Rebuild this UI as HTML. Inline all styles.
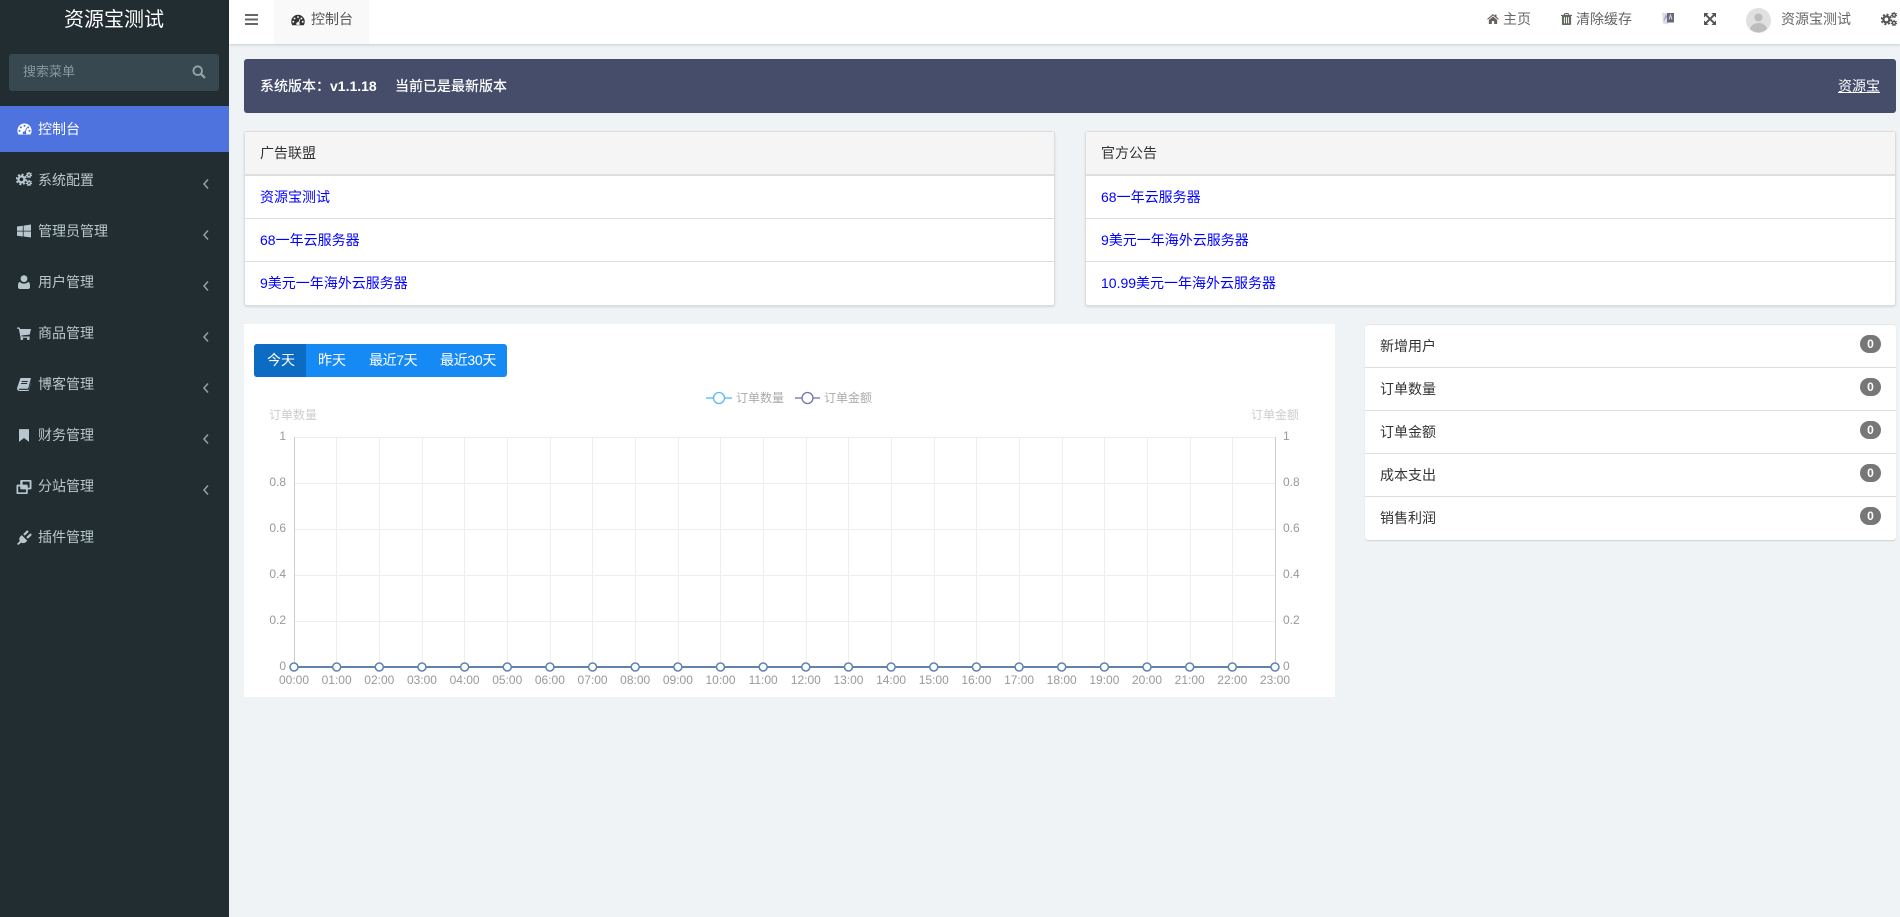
<!DOCTYPE html>
<html lang="zh-CN"><head><meta charset="utf-8"><title>控制台</title>
<style>
*{box-sizing:border-box}
html,body{margin:0;padding:0;width:1900px;height:917px;overflow:hidden;background:#eff3f6;font:14px/20px "Liberation Sans","Noto Sans CJK SC",sans-serif;color:#333}
.a{position:absolute;white-space:nowrap}
.side{position:absolute;left:0;top:0;width:229px;height:917px;background:#222d32}
.m{position:absolute;left:38px;color:#b8c7ce;line-height:20px;white-space:nowrap}
.ic{position:absolute;display:block;fill:currentColor}
.ch{position:absolute;left:202px;width:8px;height:12px;fill:none;stroke:#8fa3ad;stroke-width:1.5}
.top{position:absolute;left:229px;top:0;width:1671px;height:44px;background:#fff;box-shadow:0 1px 3px rgba(0,0,0,.16)}
.panel{position:absolute;top:131px;height:175px;background:#fff;border:1px solid #ddd;border-radius:3px;box-shadow:0 1px 2px rgba(0,0,0,.12)}
.panel .h{height:44px;background:#f5f5f5;padding:11px 15px;color:#333;border-bottom:2px solid #ddd}
.panel .r{height:43px;padding:11px 15px;color:#00f;border-bottom:1px solid #ddd;margin-top:0}
.panel .r:last-child{border-bottom:0}
.lst{position:absolute;left:1365px;top:325px;width:531px;height:215px;background:#fff;border-radius:3px;box-shadow:0 -1px 0 #e4e6e8,0 1px 1px rgba(0,0,0,.14)}
.lst div.r{height:43px;border-bottom:1px solid #ddd;padding:11px 15px;position:relative;color:#333}
.lst div.r:last-child{border-bottom:0}
.b{position:absolute;left:495px;top:10px;width:21px;height:18px;border-radius:9px;background:#777;color:#fff;font:bold 12px/18px "Liberation Sans",sans-serif;text-align:center}
svg text{font-family:"Liberation Sans","Noto Sans CJK SC",sans-serif;font-size:12px}
</style></head><body>
<svg width="0" height="0" style="position:absolute"><defs>
<symbol id="dash" viewBox="0 0 16 13"><path fill-rule="evenodd" d="M8 0.500a7.700 7.700 0 0 0-7.700 7.700c0 1.600.4 3 1.200 4.300h13c.8-1.300 1.200-2.700 1.200-4.300A7.700 7.700 0 0 0 8 .5zM8 2a1.100 1.100 0 1 1 0 2.200A1.100 1.100 0 0 1 8 2zM4 3.600a1.100 1.100 0 1 1 0 2.200 1.100 1.100 0 0 1 0-2.200zM12 3.600a1.100 1.100 0 1 1 0 2.200 1.100 1.100 0 0 1 0-2.200zM2.600 7.400a1.100 1.100 0 1 1 0 2.200 1.100 1.100 0 0 1 0-2.200zM13.400 7.400a1.100 1.100 0 1 1 0 2.200 1.100 1.100 0 0 1 0-2.200zM10 5l.8.3-1.400 4.300c.4.4.6.8.6 1.300 0 .5-.2.9-.4 1.100H6.400c-.2-.2-.4-.6-.4-1.100 0-1.100.9-2 2-2h.4z"/></symbol>
<symbol id="cogs" viewBox="0 0 16 14"><g fill="none" stroke="currentColor"><circle cx="5.400" cy="7.400" r="3" stroke-width="2.300"/><circle cx="5.400" cy="7.400" r="4.900" stroke-width="1.800" stroke-dasharray="2 1.850"/><circle cx="13" cy="3" r="1.600" stroke-width="1.400"/><circle cx="13" cy="3" r="2.600" stroke-width="1.100" stroke-dasharray="1.200 1.100"/><circle cx="13" cy="11" r="1.600" stroke-width="1.400"/><circle cx="13" cy="11" r="2.600" stroke-width="1.100" stroke-dasharray="1.200 1.100"/></g></symbol>
<symbol id="win" viewBox="0 0 14 13"><path d="M0 2l5.800-.8v5H0zM6.600 1.100L14 0v6.200H6.600zM0 7h5.800v5L0 11.200zM6.600 7H14v6l-7.400-1z"/></symbol>
<symbol id="user" viewBox="0 0 12 14"><circle cx="6" cy="3.700" r="3.400"/><path d="M1.500 6.800C.5 7.500 0 9 0 11v1.200C0 13.200.8 14 1.800 14h8.400c1 0 1.800-.8 1.800-1.800V11c0-2-.5-3.500-1.500-4.200C9.500 8 7.900 8.600 6 8.600S2.500 8 1.500 6.800z"/></symbol>
<symbol id="cart" viewBox="0 0 14 13"><path d="M0 .5h2.600l.5 1.500H14l-1.300 5.600-8.300.9.300 1h8v1.200H3.600L1.800 1.700H0z"/><circle cx="4.800" cy="11.700" r="1.300"/><circle cx="11.300" cy="11.700" r="1.300"/></symbol>
<symbol id="book" viewBox="0 0 14 13"><path fill-rule="evenodd" d="M3.500 0H14l-2.600 9.800c-.2.700-.7 1-1.300 1H2.300c-.5 0-.7.3-.6.600.1.300.4.500.9.500h8.500c.4 0 .8-.2 1-.7L14 4.500v.8l-2 6.800c-.1.500-.6.900-1.200.9H2.400C1.200 13 .2 12.100 0 11 0 10.300.1 9.700.4 9zM4.700 3h6v1h-6zM4.100 5h6v1h-6z"/></symbol>
<symbol id="mark" viewBox="0 0 11 14"><path d="M0 0h11v14L5.500 9.800 0 14z"/></symbol>
<symbol id="clone" viewBox="0 0 16 16"><path fill-rule="evenodd" d="M5 1h10a1 1 0 0 1 1 1v8a1 1 0 0 1-1 1h-3v4a1 1 0 0 1-1 1H1a1 1 0 0 1-1-1V7a1 1 0 0 1 1-1h3V2a1 1 0 0 1 1-1zm1.500 1.800V6H11a1 1 0 0 1 1 1v2.200h2V2.800zM1.800 8v6.200h8.400V11H5a1 1 0 0 1-1-1V8z"/></symbol>
<symbol id="plug" viewBox="0 0 14 14"><path d="M0 12.900l2.600-2.500c-.8-1.500-.6-3.200.6-4.400l1.200-1.200 5.200 5.200-1.200 1.200c-1.200 1.200-2.900 1.400-4.400.6L1.100 14zM5.800 3.800L8.900.7c.4-.4 1.100-.4 1.500 0s.4 1.100 0 1.500L7.300 5.300zM8.700 6.700l3.100-3.100c.4-.4 1.100-.4 1.500 0s.4 1.100 0 1.500l-3.100 3.100z"/></symbol>
<symbol id="home" viewBox="0 0 14 12"><path d="M7 0l2.400 2V.8h1.800v2.700L14 5.900l-.8 1L7 1.800.8 6.900 0 5.900zM2 7.200L7 3l5 4.200V12H8.400V8.500H5.600V12H2z"/></symbol>
<symbol id="trash" viewBox="0 0 12 13"><path fill-rule="evenodd" d="M4 0h4l1 2h3v1.200h-1V12c0 .6-.4 1-1 1H2c-.6 0-1-.4-1-1V3.200H0V2h3zM4.700 1.100L4.300 2h3.400l-.4-.9zM3.200 4.500v6.800h1V4.500zM5.500 4.500v6.800h1V4.500zM7.800 4.500v6.800h1V4.500z"/></symbol>
<symbol id="exp" viewBox="0 0 12 12"><path d="M0 0h4.600L3 1.600 6 4.600 9 1.600 7.400 0H12v4.600L10.400 3 7.400 6l3 3 1.600-1.600V12H7.400L9 10.400 6 7.400 3 10.400 4.600 12H0V7.400L1.600 9l3-3-3-3L0 4.600z"/></symbol>
<symbol id="chev" viewBox="0 0 8 12"><path d="M6 1.500L2 6l4 4.500"/></symbol>
</defs></svg>

<div class="side">
<div class="a" style="left:64px;top:6px;font-size:20px;line-height:28px;color:#fff;width:100px;text-align:center">资源宝测试</div>
<div class="a" style="left:9px;top:54px;width:210px;height:37px;background:#374850;border-radius:3px"></div>
<div class="a" style="left:23px;top:62px;font-size:13px;color:#8a989f">搜索菜单</div>
<svg class="ic" style="left:192px;top:65px;color:#95a1a6" width="14" height="14" viewBox="0 0 13 13"><circle cx="5.300" cy="5.300" r="4" fill="none" stroke="currentColor" stroke-width="1.800"/><path d="M8.300 8.300l3.700 3.700" stroke="currentColor" stroke-width="2.200"/></svg>
<div class="a" style="left:0;top:106px;width:229px;height:46px;background:#4e73df"></div>

<svg class="ic" style="left:17px;top:123px;color:#fff" width="15" height="12"><use href="#dash"/></svg>
<div class="m" style="top:119px;color:#fff">控制台</div>

<svg class="ic" style="left:16px;top:172px;color:#b8c7ce" width="16" height="14"><use href="#cogs"/></svg>
<div class="m" style="top:170px">系统配置</div><svg class="ch" style="top:178px"><use href="#chev"/></svg>

<svg class="ic" style="left:17px;top:224px;color:#b8c7ce" width="14" height="14"><use href="#win"/></svg>
<div class="m" style="top:221px">管理员管理</div><svg class="ch" style="top:229px"><use href="#chev"/></svg>

<svg class="ic" style="left:18px;top:275px;color:#b8c7ce" width="12" height="14"><use href="#user"/></svg>
<div class="m" style="top:272px">用户管理</div><svg class="ch" style="top:280px"><use href="#chev"/></svg>

<svg class="ic" style="left:17px;top:327px;color:#b8c7ce" width="14" height="13"><use href="#cart"/></svg>
<div class="m" style="top:323px">商品管理</div><svg class="ch" style="top:331px"><use href="#chev"/></svg>

<svg class="ic" style="left:17px;top:378px;color:#b8c7ce" width="14" height="13"><use href="#book"/></svg>
<div class="m" style="top:374px">博客管理</div><svg class="ch" style="top:382px"><use href="#chev"/></svg>

<svg class="ic" style="left:19px;top:429px;color:#b8c7ce" width="10" height="13"><use href="#mark"/></svg>
<div class="m" style="top:425px">财务管理</div><svg class="ch" style="top:433px"><use href="#chev"/></svg>

<svg class="ic" style="left:16px;top:479px;color:#b8c7ce" width="16" height="15"><use href="#clone"/></svg>
<div class="m" style="top:476px">分站管理</div><svg class="ch" style="top:484px"><use href="#chev"/></svg>

<svg class="ic" style="left:17px;top:530px;color:#b8c7ce" width="15" height="15"><use href="#plug"/></svg>
<div class="m" style="top:527px">插件管理</div>
</div>

<div class="top"></div>
<svg class="a" style="left:245px;top:14px" width="13" height="11"><path d="M0 0h13v2H0zM0 4.500h13v2H0zM0 9h13v2H0z" fill="#666"/></svg>
<div class="a" style="left:274px;top:0;width:95px;height:44px;background:#f9f9f9"></div>
<svg class="ic" style="left:291px;top:14px;color:#333" width="14" height="12"><use href="#dash"/></svg>
<div class="a" style="left:311px;top:9px;color:#555">控制台</div>

<svg class="ic" style="left:1487px;top:14px;color:#66605c" width="12" height="10"><use href="#home"/></svg>
<div class="a" style="left:1503px;top:9px;color:#666">主页</div>
<svg class="ic" style="left:1561px;top:13px;color:#5f6a5c" width="11" height="12"><use href="#trash"/></svg>
<div class="a" style="left:1576px;top:9px;color:#666">清除缓存</div>
<svg class="a" style="left:1662px;top:11px" width="12" height="15" viewBox="0 0 12 14"><path d="M0 1l6 1v11L1 12z" fill="#dcdcec"/><path d="M5 1.500h7V11H5z" fill="#66696f"/><path d="M7 8l1.500-4.500L10 8" stroke="#d8d8e0" fill="none"/><path d="M2 9l2-5 1 3" stroke="#9a9ac8" fill="none"/></svg>
<svg class="ic" style="left:1704px;top:13px;color:#555" width="12" height="12"><use href="#exp"/></svg>
<svg class="a" style="left:1746px;top:8px" width="25" height="25" viewBox="0 0 25 25"><circle cx="12.500" cy="12.500" r="12.500" fill="#e0e0e0"/><circle cx="12.500" cy="9.500" r="4" fill="#bdbdbd"/><path d="M4 21c1-4 4.500-6 8.500-6s7.500 2 8.500 6a12.500 12.500 0 0 1-17 0z" fill="#bdbdbd"/></svg>
<div class="a" style="left:1781px;top:9px;color:#666">资源宝测试</div>
<svg class="ic" style="left:1881px;top:12px;color:#555" width="16" height="14"><use href="#cogs"/></svg>

<div class="a" style="left:244px;top:59px;width:1652px;height:54px;background:#454d6a;border-radius:3px"></div>
<div class="a" style="left:260px;top:76px;color:#fff;font-weight:500">系统版本：<b>v1.1.18</b></div>
<div class="a" style="left:395px;top:76px;color:#fff;font-weight:500">当前已是最新版本</div>
<div class="a" style="left:1838px;top:76px;color:#fff;text-decoration:underline">资源宝</div>

<div class="panel" style="left:244px;width:811px">
<div class="h">广告联盟</div><div class="r">资源宝测试</div><div class="r">68一年云服务器</div><div class="r">9美元一年海外云服务器</div>
</div>
<div class="panel" style="left:1085px;width:811px">
<div class="h">官方公告</div><div class="r">68一年云服务器</div><div class="r">9美元一年海外云服务器</div><div class="r">10.99美元一年海外云服务器</div>
</div>

<div class="a" style="left:244px;top:324px;width:1091px;height:373px;background:#fff"></div>
<div class="a" style="left:254px;top:344px;width:253px;height:33px;background:#168af4;border-radius:3px"></div>
<div class="a" style="left:254px;top:344px;width:52px;height:33px;background:#0c6cc4;border-radius:3px 0 0 3px"></div>
<div class="a" style="left:267px;top:350px;color:#fff">今天</div>
<div class="a" style="left:318px;top:350px;color:#fff">昨天</div>
<div class="a" style="left:369px;top:350px;color:#fff;letter-spacing:-.4px">最近7天</div>
<div class="a" style="left:440px;top:350px;color:#fff;letter-spacing:-.3px">最近30天</div>

<svg class="a" style="left:0;top:0" width="1900" height="917">
<g stroke="#eee" stroke-width="1">
<path d="M294 437.500H1275M294 483.500H1275M294 529.500H1275M294 575.500H1275M294 621.500H1275"/>
<path d="M336.500 437V667M379.500 437V667M422.500 437V667M464.500 437V667M507.500 437V667M550.500 437V667M592.500 437V667M635.500 437V667M678.500 437V667M720.500 437V667M763.500 437V667M806.500 437V667M848.500 437V667M891.500 437V667M934.500 437V667M976.500 437V667M1019.500 437V667M1062.500 437V667M1104.500 437V667M1147.500 437V667M1190.500 437V667M1232.500 437V667"/>
</g>
<path d="M294.500 437V667M1275.500 437V667" stroke="#ccc" stroke-width="1"/>
<path d="M294 667H1275" stroke="#5f82b0" stroke-width="2"/>
<g fill="#fff" stroke="#5f82b0" stroke-width="1.500">
<circle cx="294" cy="667" r="4"/><circle cx="336.650" cy="667" r="4"/><circle cx="379.300" cy="667" r="4"/><circle cx="421.960" cy="667" r="4"/><circle cx="464.600" cy="667" r="4"/><circle cx="507.260" cy="667" r="4"/><circle cx="549.900" cy="667" r="4"/><circle cx="592.570" cy="667" r="4"/><circle cx="635.200" cy="667" r="4"/><circle cx="677.870" cy="667" r="4"/><circle cx="720.500" cy="667" r="4"/><circle cx="763.170" cy="667" r="4"/><circle cx="805.800" cy="667" r="4"/><circle cx="848.480" cy="667" r="4"/><circle cx="891.100" cy="667" r="4"/><circle cx="933.780" cy="667" r="4"/><circle cx="976.400" cy="667" r="4"/><circle cx="1019.090" cy="667" r="4"/><circle cx="1061.700" cy="667" r="4"/><circle cx="1104.390" cy="667" r="4"/><circle cx="1147" cy="667" r="4"/><circle cx="1189.700" cy="667" r="4"/><circle cx="1232.300" cy="667" r="4"/><circle cx="1275" cy="667" r="4"/>
</g>
<g fill="#999" text-anchor="middle">
<text x="294" y="684">00:00</text><text x="336.650" y="684">01:00</text><text x="379.300" y="684">02:00</text><text x="421.960" y="684">03:00</text><text x="464.600" y="684">04:00</text><text x="507.260" y="684">05:00</text><text x="549.900" y="684">06:00</text><text x="592.570" y="684">07:00</text><text x="635.200" y="684">08:00</text><text x="677.870" y="684">09:00</text><text x="720.500" y="684">10:00</text><text x="763.170" y="684">11:00</text><text x="805.800" y="684">12:00</text><text x="848.480" y="684">13:00</text><text x="891.100" y="684">14:00</text><text x="933.780" y="684">15:00</text><text x="976.400" y="684">16:00</text><text x="1019.090" y="684">17:00</text><text x="1061.700" y="684">18:00</text><text x="1104.390" y="684">19:00</text><text x="1147" y="684">20:00</text><text x="1189.700" y="684">21:00</text><text x="1232.300" y="684">22:00</text><text x="1275" y="684">23:00</text>
</g>
<g fill="#999" text-anchor="end">
<text x="286" y="440">1</text><text x="286" y="486">0.8</text><text x="286" y="532">0.6</text><text x="286" y="578">0.4</text><text x="286" y="624">0.2</text><text x="286" y="670">0</text>
</g>
<g fill="#999">
<text x="1283" y="440">1</text><text x="1283" y="486">0.8</text><text x="1283" y="532">0.6</text><text x="1283" y="578">0.4</text><text x="1283" y="624">0.2</text><text x="1283" y="670">0</text>
</g>
<text x="269" y="419" fill="#ccc">订单数量</text>
<text x="1251" y="419" fill="#ccc">订单金额</text>
<path d="M706 398h26" stroke="#8fd3f4" stroke-width="2"/>
<circle cx="719" cy="398" r="5.500" fill="#fff" stroke="#58bdea" stroke-width="1.300"/>
<text x="736" y="402" fill="#aaa">订单数量</text>
<path d="M795 398h25" stroke="#9ea6c0" stroke-width="2"/>
<circle cx="807.500" cy="398" r="5.500" fill="#fff" stroke="#6c7aa5" stroke-width="1.300"/>
<text x="824" y="402" fill="#aaa">订单金额</text>
</svg>

<div class="lst">
<div class="r">新增用户<span class="b">0</span></div>
<div class="r">订单数量<span class="b">0</span></div>
<div class="r">订单金额<span class="b">0</span></div>
<div class="r">成本支出<span class="b">0</span></div>
<div class="r">销售利润<span class="b">0</span></div>
</div>
</body></html>
